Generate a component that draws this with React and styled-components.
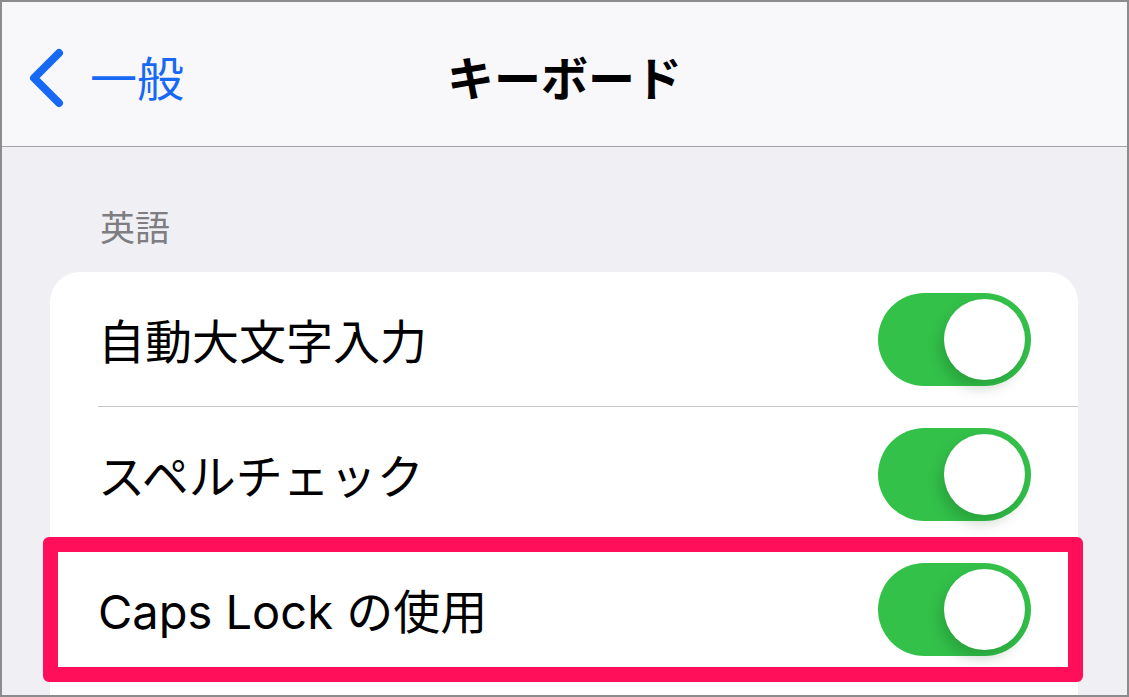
import React from 'react';
import styled, { createGlobalStyle } from 'styled-components';

const GlobalStyle = createGlobalStyle`
  body {
    margin: 0;
    font-family: "Inter", "Noto Sans CJK JP", sans-serif;
  }
`;

const Frame = styled.div`
  width: 1129px;
  height: 697px;
  box-sizing: border-box;
  border: 2px solid #8c8c8c;
  background: #efeff4;
  overflow: hidden;
  display: flex;
  flex-direction: column;
`;

const Header = styled.header`
  height: 145px;
  box-sizing: border-box;
  padding-top: 8px;
  flex-shrink: 0;
  background: #f8f8fa;
  border-bottom: 1px solid #a4a4a8;
  display: grid;
  grid-template-columns: 1fr auto 1fr;
  align-items: center;
`;

const Back = styled.div`
  display: flex;
  align-items: center;
  gap: 22px;
  padding-left: 26px;
  color: #1769f5;
  font-size: 47px;
  line-height: 1;
`;

const Title = styled.h1`
  margin: 0;
  font-size: 47px;
  font-weight: 700;
  color: #000;
  line-height: 1;
`;

const Body = styled.main`
  padding: 61px 49px 0 48px;
`;

const SectionLabel = styled.div`
  padding-left: 50px;
  font-size: 35px;
  line-height: 40px;
  color: #7d7d82;
  margin-bottom: 24px;
`;

const Card = styled.section`
  position: relative;
  background: #fff;
  border-radius: 30px 30px 0 0;
  padding-left: 48px;
  height: 460px;
`;

const Row = styled.div`
  height: 134px;
  display: flex;
  align-items: center;
  justify-content: space-between;
  padding-right: 47px;
  border-bottom: ${p => (p.$last ? 'none' : '1px solid #c6c6c8')};
`;

const Label = styled.span`
  font-size: 47px;
  line-height: 1;
  color: #000;
  padding-top: 4px;
`;

const Switch = styled.div`
  position: relative;
  width: 153px;
  height: 93px;
  border-radius: 47px;
  background: #33c14a;
  flex-shrink: 0;
`;

const Knob = styled.div`
  position: absolute;
  top: 6px;
  right: 6px;
  width: 81px;
  height: 81px;
  border-radius: 50%;
  background: #fff;
  box-shadow: -4px 8px 14px rgba(0, 60, 10, 0.22);
`;

const Highlight = styled.div`
  position: absolute;
  left: -7px;
  top: 265px;
  width: 1040px;
  height: 145px;
  box-sizing: border-box;
  border: 15px solid #ff0f59;
  border-radius: 6px;
  pointer-events: none;
`;

const Chevron = () => (
  <svg width="40" height="64" viewBox="0 0 40 64">
    <path
      d="M31 7 L6 32 L31 57"
      fill="none"
      stroke="#1769f5"
      strokeWidth="8"
      strokeLinecap="round"
      strokeLinejoin="round"
    />
  </svg>
);

const Toggle = () => (
  <Switch>
    <Knob />
  </Switch>
);

const rows = ['自動大文字入力', 'スペルチェック', 'Caps Lock の使用'];

export default function App() {
  return (
    <>
      <GlobalStyle />
      <Frame>
        <Header>
          <Back>
            <Chevron />
            <span>一般</span>
          </Back>
          <Title>キーボード</Title>
          <div />
        </Header>
        <Body>
          <SectionLabel>英語</SectionLabel>
          <Card>
            {rows.map((r, i) => (
              <Row key={r} $last={i === rows.length - 1}>
                <Label>{r}</Label>
                <Toggle />
              </Row>
            ))}
            <Highlight />
          </Card>
        </Body>
      </Frame>
    </>
  );
}
